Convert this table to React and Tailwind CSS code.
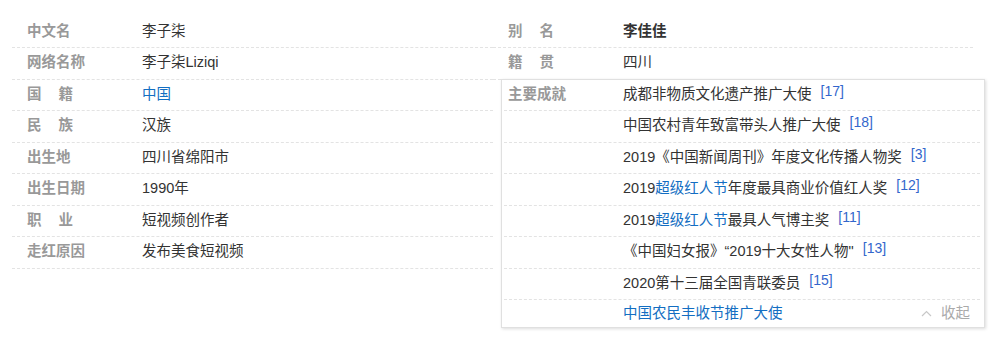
import React from 'react';

const FONT = { fontFamily: '"Liberation Sans", "Noto Sans CJK SC", sans-serif' };

const Spaced = ({ a, b }) => (
  <span>
    {a}
    <span className="ml-[17px]">{b}</span>
  </span>
);

const Link = ({ children }) => <span className="text-[#136ec2]">{children}</span>;

const Sup = ({ n }) => (
  <span className="relative -top-[4px] ml-[9px] text-[14px] leading-none text-[#3366cc]">[{n}]</span>
);

const Row = ({ label, children, labelWidth = 'w-[130px] pl-[15px]', last = false }) => (
  <div
    className={`flex h-[31.5px] items-center ${
      last ? '' : 'border-b border-dashed border-[#e3e3e3]'
    }`}
  >
    <div className={`${labelWidth} shrink-0 font-bold text-[#999]`}>{label}</div>
    <div className="flex min-w-0 flex-1 items-center text-[#333]">{children}</div>
  </div>
);

const boxLabel = 'w-[119px] pl-[4px]';

export default function App() {
  return (
    <div className="h-[340px] w-[1000px] bg-white text-[14.5px]" style={FONT}>
      <div className="flex px-[12px] pt-[16.5px]">
        <div className="w-[481px]">
          <Row label="中文名">李子柒</Row>
          <Row label="网络名称">李子柒Liziqi</Row>
          <Row label={<Spaced a="国" b="籍" />}>
            <Link>中国</Link>
          </Row>
          <Row label={<Spaced a="民" b="族" />}>汉族</Row>
          <Row label="出生地">四川省绵阳市</Row>
          <Row label="出生日期">1990年</Row>
          <Row label={<Spaced a="职" b="业" />}>短视频创作者</Row>
          <Row label="走红原因">发布美食短视频</Row>
        </div>

        <div className="w-[480px]">
          <Row label={<Spaced a="别" b="名" />}>
            <span className="font-bold">李佳佳</span>
          </Row>
          <Row label={<Spaced a="籍" b="贯" />}>四川</Row>

          <div className="relative z-10 -mt-px ml-[8px] w-[484px] border border-[#e0e0e0] bg-white px-[2px] pr-[4px] shadow-[1px_1px_3px_rgba(0,0,0,0.14)]">
            <Row label="主要成就" labelWidth={boxLabel}>
              成都非物质文化遗产推广大使
              <Sup n="17" />
            </Row>
            <Row label="" labelWidth={boxLabel}>
              中国农村青年致富带头人推广大使
              <Sup n="18" />
            </Row>
            <Row label="" labelWidth={boxLabel}>
              2019《中国新闻周刊》年度文化传播人物奖
              <Sup n="3" />
            </Row>
            <Row label="" labelWidth={boxLabel}>
              2019<Link>超级红人节</Link>年度最具商业价值红人奖
              <Sup n="12" />
            </Row>
            <Row label="" labelWidth={boxLabel}>
              2019<Link>超级红人节</Link>最具人气博主奖
              <Sup n="11" />
            </Row>
            <Row label="" labelWidth={boxLabel}>
              《中国妇女报》“2019十大女性人物"
              <Sup n="13" />
            </Row>
            <Row label="" labelWidth={boxLabel}>
              2020第十三届全国青联委员
              <Sup n="15" />
            </Row>
            <div className="flex h-[27px] items-center">
              <div className={`${boxLabel} shrink-0`} />
              <Link>中国农民丰收节推广大使</Link>
              <div className="ml-auto flex items-center gap-[9px] pr-[10px] text-[#aaa]">
                <svg width="11" height="7" viewBox="0 0 11 7" fill="none">
                  <polyline points="1,6 5.5,1.5 10,6" stroke="#c8c8c8" strokeWidth="1.2" />
                </svg>
                <span>收起</span>
              </div>
            </div>
          </div>
        </div>
      </div>
    </div>
  );
}
